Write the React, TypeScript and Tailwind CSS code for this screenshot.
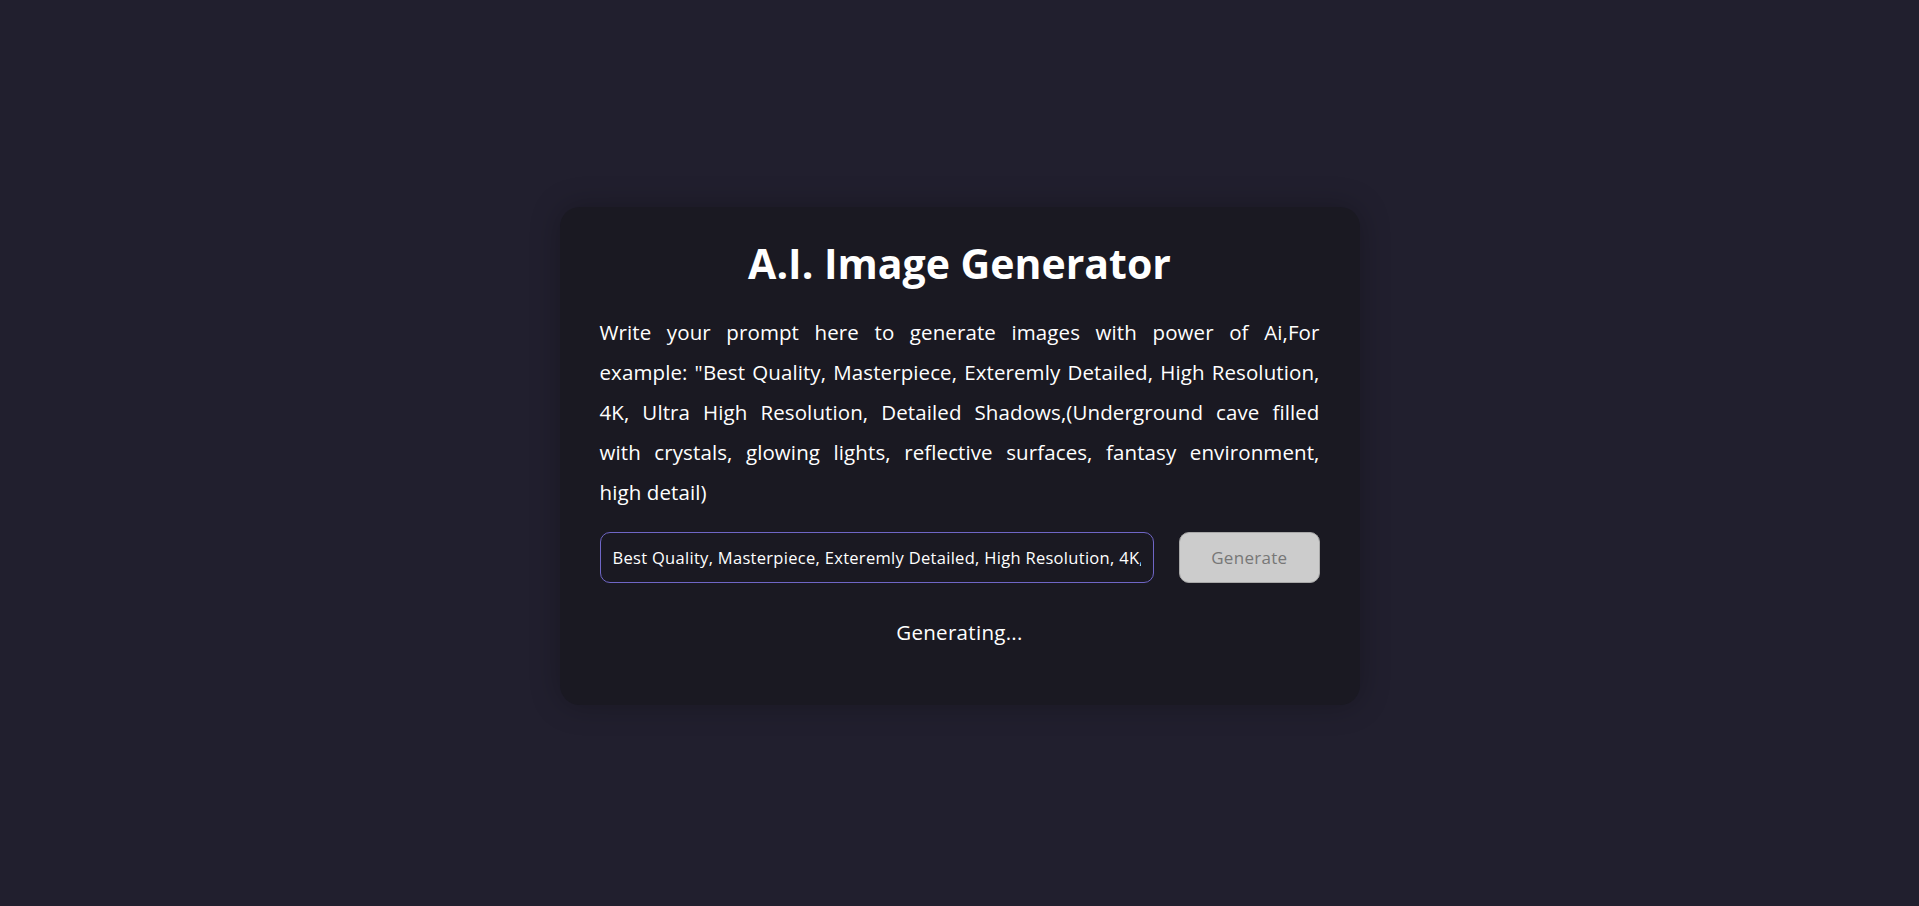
import React from 'react';

const PROMPT =
  'Best Quality, Masterpiece, Exteremly Detailed, High Resolution, 4K, Ultra High Resolution, Detailed Shadows,(Underground cave filled with crystals, glowing lights, reflective surfaces, fantasy environment, high detail)';

const LINES = [
  'Write your prompt here to generate images with power of Ai,For',
  'example: "Best Quality, Masterpiece, Exteremly Detailed, High Resolution,',
  '4K, Ultra High Resolution, Detailed Shadows,(Underground cave filled',
  'with crystals, glowing lights, reflective surfaces, fantasy environment,',
];

export default function App() {
  return (
    <div className="min-h-screen w-full bg-[#211f2e] flex justify-center pt-[207px] font-['Open_Sans',sans-serif] text-white">
      <div className="w-[800px] h-[498px] bg-[#1a1922] rounded-[20px] shadow-[0_0_30px_rgba(0,0,0,0.25)] px-10 pt-[26px] flex flex-col">
        <h1 className="text-center font-bold text-[41px] leading-[60px]">
          A.I. Image Generator
        </h1>
        <p className="mt-[19px] text-[20.5px] leading-[40px] tracking-[0.1px] text-justify">
          {LINES.map((line) => (
            <span key={line} className="block whitespace-nowrap [text-align-last:justify]">
              {line}
            </span>
          ))}
          <span className="block">high detail)</span>
        </p>
        <div className="mt-[20px] flex items-center gap-[25px]">
          <input
            type="text"
            readOnly
            value={PROMPT}
            className="h-[51px] w-[557px] rounded-[10px] border border-[#6f66c6] bg-transparent px-[12px] text-[16.5px] tracking-[0.3px] text-white outline-none"
          />
          <button
            type="button"
            disabled
            className="h-[51px] w-[141px] rounded-[10px] border border-[#a8a8a8] bg-[#cccccc] text-[17px] tracking-[0.3px] text-[#777777]"
          >
            Generate
          </button>
        </div>
        <div className="mt-[34px] text-center text-[20.5px] leading-[30px] tracking-[0.3px]">Generating...</div>
      </div>
    </div>
  );
}
